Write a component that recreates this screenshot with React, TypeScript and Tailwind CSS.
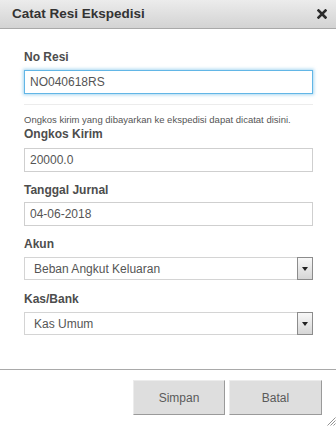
import React from "react";

function Label({ children, className = "" }: { children: React.ReactNode; className?: string }) {
  return (
    <div className={"text-[12px] leading-[14px] font-bold text-[#4d4d4d] " + className}>{children}</div>
  );
}

function TextInput({ value, focused = false, className = "" }: { value: string; focused?: boolean; className?: string }) {
  return (
    <div
      className={
        "h-[24px] flex items-center pl-[5px] text-[12px] text-[#555] bg-white border " +
        (focused
          ? "border-[#62b6e6] shadow-[0_0_3px_1px_rgba(98,182,230,0.55)] "
          : "border-[#cfcfcf] ") +
        className
      }
    >
      {value}
    </div>
  );
}

function Select({ value, className = "" }: { value: string; className?: string }) {
  return (
    <div className={"h-[23px] flex " + className}>
      <div className="flex-1 flex items-center pl-[9px] text-[12px] text-[#555] bg-white border border-r-0 border-[#d4d4d4]">
        {value}
      </div>
      <div className="w-[16px] h-[23px] border border-[#8c8c8c] bg-gradient-to-b from-[#f8f8f8] to-[#d6d6d6] flex items-center justify-center">
        <svg width="6" height="4" viewBox="0 0 6 4">
          <polygon points="0,0 6,0 3,4" fill="#222" />
        </svg>
      </div>
    </div>
  );
}

export default function App() {
  return (
    <div
      className="w-[336px] h-[426px] bg-white relative overflow-hidden flex flex-col"
      style={{ fontFamily: '"Liberation Sans", Arial, sans-serif' }}
    >
      <div className="h-[29px] shrink-0 flex items-center justify-between pl-[12px] pr-[7px] bg-gradient-to-b from-[#ececec] to-[#d3d3d3] border-b border-[#a9a9a9]">
        <span className="text-[13.5px] font-bold text-[#333]">Catat Resi Ekspedisi</span>
        <svg width="10" height="10" viewBox="0 0 10 10" className="mr-[2px]">
          <path d="M1.5 1.5 L8.5 8.5 M8.5 1.5 L1.5 8.5" stroke="#2b2b2b" strokeWidth="2.6" strokeLinecap="square" />
        </svg>
      </div>

      <div className="flex-1 pl-[24px] pr-[23px] pt-[21px]">
        <Label>No Resi</Label>
        <TextInput value="NO040618RS" focused className="mt-[6px]" />
        <div className="mt-[10px] h-px bg-[#ececec]" />
        <div className="mt-[9px] text-[9.5px] leading-[11px] text-[#555] whitespace-nowrap">
          Ongkos kirim yang dibayarkan ke ekspedisi dapat dicatat disini.
        </div>
        <Label className="mt-[2px]">Ongkos Kirim</Label>
        <TextInput value="20000.0" className="mt-[7px]" />
        <Label className="mt-[11px]">Tanggal Jurnal</Label>
        <TextInput value="04-06-2018" className="mt-[5px]" />
        <Label className="mt-[11px]">Akun</Label>
        <Select value="Beban Angkut Keluaran" className="mt-[6px]" />
        <Label className="mt-[12px]">Kas/Bank</Label>
        <Select value="Kas Umum" className="mt-[6px]" />
      </div>

      <div className="h-[57px] shrink-0 border-t border-[#a9a9a9] flex justify-end items-start pt-[10px] pr-[14px] gap-[4px]">
        <button className="w-[92px] h-[35px] bg-[#dedede] border border-[#ececec] border-r-[#9a9a9a] border-b-[#9a9a9a] text-[12px] text-[#5a5a5a]">
          Simpan
        </button>
        <button className="w-[93px] h-[35px] bg-[#dedede] border border-[#ececec] border-r-[#9a9a9a] border-b-[#9a9a9a] text-[12px] text-[#5a5a5a]">
          Batal
        </button>
      </div>

      <svg width="10" height="10" viewBox="0 0 10 10" className="absolute right-0 bottom-0">
        <path d="M9.5 1.5 L1.5 9.5 M9.5 4.5 L4.5 9.5 M9.5 7.5 L7.5 9.5" stroke="#777" strokeWidth="0.8" />
      </svg>
    </div>
  );
}
